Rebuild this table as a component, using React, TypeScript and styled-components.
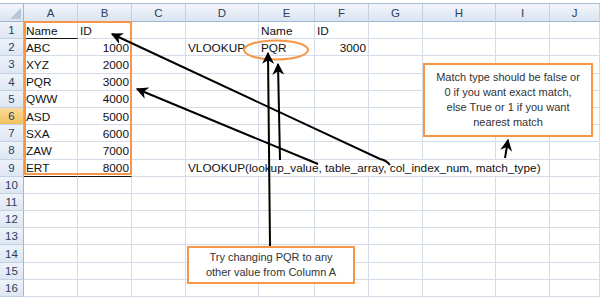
import React from 'react'
import styled, { createGlobalStyle } from 'styled-components'

const GlobalStyle = createGlobalStyle`
  body {
    margin: 0;
    background: #fff;
  }
`

const COLS = ['A', 'B', 'C', 'D', 'E', 'F', 'G', 'H', 'I', 'J']
const WIDTHS = [54, 54, 54, 73, 56, 54, 54, 73, 54, 50]

type CellData = { text: string; align?: 'left' | 'right'; span?: number; under?: boolean }

// row number -> column letter -> cell
const DATA: Record<number, Record<string, CellData>> = {
  1: {
    A: { text: 'Name', under: true },
    B: { text: 'ID' },
    E: { text: 'Name' },
    F: { text: 'ID' },
  },
  2: {
    A: { text: 'ABC' },
    B: { text: '1000', align: 'right' },
    D: { text: 'VLOOKUP' },
    E: { text: 'PQR' },
    F: { text: '3000', align: 'right' },
  },
  3: { A: { text: 'XYZ' }, B: { text: '2000', align: 'right' } },
  4: { A: { text: 'PQR' }, B: { text: '3000', align: 'right' } },
  5: { A: { text: 'QWW' }, B: { text: '4000', align: 'right' } },
  6: { A: { text: 'ASD' }, B: { text: '5000', align: 'right' } },
  7: { A: { text: 'SXA' }, B: { text: '6000', align: 'right' } },
  8: { A: { text: 'ZAW' }, B: { text: '7000', align: 'right' } },
  9: {
    A: { text: 'ERT', under: true },
    B: { text: '8000', align: 'right', under: true },
    D: { text: 'VLOOKUP(lookup_value, table_array, col_index_num, match_type)', span: 6 },
  },
}

const Sheet = styled.div`
  position: relative;
  width: 600px;
  height: 299px;
  padding-top: 3px;
  box-sizing: border-box;
  overflow: hidden;
  background: #fff;
  font-family: 'Liberation Sans', Arial, sans-serif;
`

const Grid = styled.div`
  display: grid;
  grid-template-columns: 24px ${WIDTHS.map((w) => w + 'px').join(' ')};
  grid-template-rows: 18px repeat(16, 17.2px);
  border-top: 1px solid #a7bcd6;
`

const Corner = styled.div`
  position: relative;
  background: linear-gradient(#f3f6fb, #dbe4f1);
  border-right: 1px solid #9eb6ce;
  border-bottom: 1px solid #9eb6ce;

  &::after {
    content: '';
    position: absolute;
    right: 2px;
    bottom: 2px;
    border-left: 11px solid transparent;
    border-bottom: 11px solid #b9c6d8;
  }
`

const ColHead = styled.div`
  display: flex;
  align-items: center;
  justify-content: center;
  background: linear-gradient(#f3f6fb, #dbe4f1);
  border-right: 1px solid #c3d0e2;
  border-bottom: 1px solid #9eb6ce;
  color: #2c3e5e;
  font-size: 11.5px;
`

const RowHead = styled.div<{ $active?: boolean }>`
  display: flex;
  align-items: center;
  justify-content: center;
  background: ${(p) =>
    p.$active ? 'linear-gradient(#f9dc9d, #f2c15c)' : 'linear-gradient(#eef3fa, #dde6f2)'};
  border-right: 1px solid #9eb6ce;
  border-bottom: 1px solid #c3d0e2;
  color: #2c3e5e;
  font-size: 11.5px;
`

const Cell = styled.div<{ $align?: 'left' | 'right'; $span?: number; $under?: boolean }>`
  display: flex;
  align-items: center;
  justify-content: ${(p) => (p.$align === 'right' ? 'flex-end' : 'flex-start')};
  grid-column: span ${(p) => p.$span ?? 1};
  min-width: 0;
  padding: 1px 2px 0;
  border-right: 1px solid #d5dbe7;
  border-bottom: 1px solid ${(p) => (p.$under ? '#111' : '#d5dbe7')};
  color: #111;
  font-size: 11.8px;
  white-space: nowrap;
`

const Overlay = styled.svg`
  position: absolute;
  top: 0;
  left: 0;
  pointer-events: none;
`

const Callout = styled.div`
  position: absolute;
  box-sizing: border-box;
  display: flex;
  flex-direction: column;
  justify-content: center;
  background: #fff;
  border: 2px solid #f79646;
  color: #333;
  font-size: 11px;
  line-height: 15px;
  text-align: center;
`

const MatchNote = styled(Callout)`
  left: 423px;
  top: 63px;
  width: 170px;
  height: 74px;
`

const TryNote = styled(Callout)`
  left: 187px;
  top: 246px;
  width: 168px;
  height: 38px;
`

const Row = ({ n }: { n: number }) => {
  const cells = DATA[n] ?? {}
  const out: React.ReactNode[] = [
    <RowHead key="h" $active={n === 6}>
      {n}
    </RowHead>,
  ]
  let skip = 0
  COLS.forEach((c) => {
    if (skip > 0) {
      skip--
      return
    }
    const d = cells[c]
    if (d?.span) skip = d.span - 1
    out.push(
      <Cell key={c} $align={d?.align} $span={d?.span} $under={d?.under}>
        {d?.text}
      </Cell>
    )
  })
  return <>{out}</>
}

const App = () => {
  return (
    <>
      <GlobalStyle />
      <Sheet>
        <Grid>
          <Corner />
          {COLS.map((c) => (
            <ColHead key={c}>{c}</ColHead>
          ))}
          {Array.from({ length: 16 }, (_, i) => (
            <Row key={i} n={i + 1} />
          ))}
        </Grid>

        <Overlay width="600" height="299" viewBox="0 0 600 299">
          <defs>
            <marker
              id="head"
              viewBox="0 0 10 10"
              refX="9"
              refY="5"
              markerWidth="6"
              markerHeight="6"
              orient="auto"
            >
              <path d="M0,0 L10,5 L0,10 L3,5 z" fill="#000" />
            </marker>
          </defs>
          <rect x="25" y="22" width="106" height="152" fill="none" stroke="#f79646" strokeWidth="2" />
          <ellipse cx="276" cy="50" rx="32" ry="9.5" fill="none" stroke="#f79646" strokeWidth="2" />
          <g stroke="#000" strokeWidth="2" fill="none" markerEnd="url(#head)">
            <line x1="270" y1="246" x2="268" y2="53" />
            <line x1="280" y1="160" x2="278" y2="64" />
            <line x1="318" y1="164" x2="137" y2="89" />
            <path d="M390,165 Q386,160 380,159 L112,34" />
            <line x1="505" y1="158" x2="508" y2="140" />
          </g>
        </Overlay>

        <MatchNote>
          <span>Match type should be false or</span>
          <span>0 if you want exact match,</span>
          <span>else True or 1 if you want</span>
          <span>nearest match</span>
        </MatchNote>
        <TryNote>
          <span>Try changing PQR to any</span>
          <span>other value from Column A</span>
        </TryNote>
      </Sheet>
    </>
  )
}

export default App
